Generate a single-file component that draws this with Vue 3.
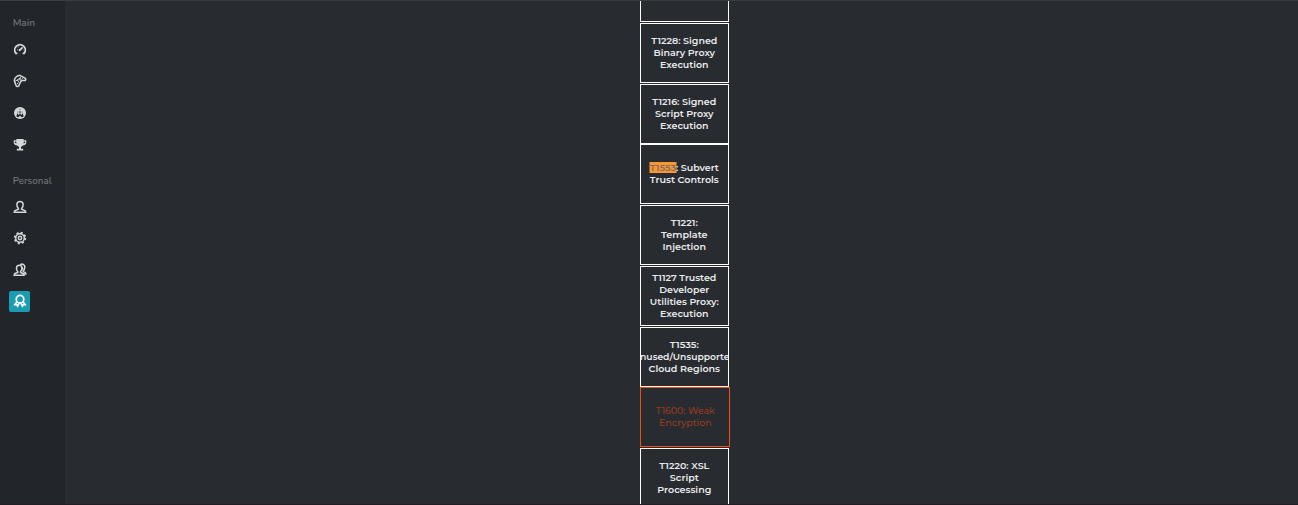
<script setup>
// Each line is [text, drawn width in px]
const cells = [
  { kind: 'first', lines: [] },
  { kind: 'gap1', lines: [['T1228: Signed', 66], ['Binary Proxy', 61.5], ['Execution', 48.5]] },
  { kind: 'gap1', lines: [['T1216: Signed', 64], ['Script Proxy', 58.5], ['Execution', 48.5]] },
  { kind: 'flush', mark: true, lines: [['T1553: Subvert', 69], ['Trust Controls', 69]] },
  { kind: 'gap1', lines: [['T1221:', 27], ['Template', 46.5], ['Injection', 43.5]] },
  { kind: 'gap1', lines: [['T1127 Trusted', 64], ['Developer', 50], ['Utilities Proxy:', 69], ['Execution', 48.5]] },
  { kind: 'gap1', lines: [['T1535:', 29], ['Unused/Unsupported', 103], ['Cloud Regions', 71.5]] },
  { kind: 'weak', lines: [['T1600: Weak', 59], ['Encryption', 52.5]] },
  { kind: 'gap1', lines: [['T1220: XSL', 50], ['Script', 29], ['Processing', 54]] },
]
</script>

<template>
  <div class="page">
    <aside class="sidebar">
      <svg class="heading" width="50" height="16"><text x="0.7" y="12" textLength="22.3" lengthAdjust="spacingAndGlyphs">Main</text></svg>
      <nav class="main-nav">
        <a class="item"><svg viewBox="0 0 14 14"><path d="M4.4 11.3H2.8A5.3 5.3 0 1 1 11.2 11.3H9.6" class="thick"/><path d="M6.7 8.2 9.6 5.3" class="thick"/><path d="M4 7.7h.5M5.2 4.8l.3.3M10 8h.3"/><circle cx="6.7" cy="8.1" r="1.1" class="fill"/></svg></a>
        <a class="item"><svg viewBox="0 0 14 14"><path d="M1.3 6.2C2 3 4.8 1.1 7.4 1.6L12.4 4.3C13.2 5.3 12.6 6.7 11.2 6.6L8.5 6.6 7.1 8.8 5.8 11.8C4.9 12.9 3.3 12.6 3 11.3L1.9 8.6Z"/><path class="thin" d="M2.2 7.4 8 3.4M4.4 5.8l1.4 2.4M9 4.4h.8M4 9.8l1.4-.9"/><circle class="thin" cx="7.2" cy="5.4" r=".8"/></svg></a>
        <a class="item"><svg viewBox="0 0 14 14"><circle cx="7" cy="7" r="6" class="fill"/><g class="cut"><path d="M3.3 10.5 4.3 7.3 5.8 9 7 7.4 8.2 9 9.7 7.3 10.7 10.5 8.8 11.2 7 9.8 5.2 11.2Z"/><circle cx="7" cy="3.3" r=".5"/><circle cx="4.9" cy="6" r=".5"/><circle cx="9.1" cy="6" r=".5"/><rect x="6.5" y="4.9" width="1" height="2.6"/></g></svg></a>
        <a class="item"><svg viewBox="0 0 14 14"><path class="fill" d="M3.4 1h7.2v1.2h2.7v2.2C13.3 6.3 11.5 7.4 9.8 7.5L8 8.9v1.8h2.2v1.7H3.8v-1.7H6V8.9L4.2 7.5C2.5 7.4.7 6.3.7 4.4V2.2h2.7Z"/><path class="cut" d="M1.9 3.5h1.3c0 .9.1 1.3.3 1.9C2.6 5.2 1.9 4.9 1.9 4.3ZM12.1 3.5h-1.3c0 .9-.1 1.3-.3 1.9 .9-.2 1.6-.5 1.6-1.1Z"/></svg></a>
      </nav>
      <svg class="heading second" width="50" height="16"><text x="0.7" y="12" textLength="39" lengthAdjust="spacingAndGlyphs">Personal</text></svg>
      <nav class="personal-nav">
        <a class="item"><svg viewBox="0 0 14 14"><path d="M5.4 8.5C4 7.2 3.8 5.6 3.9 4.3 4 2.4 5.2 1.4 7 1.4S10 2.4 10.1 4.3C10.2 5.6 10 7.2 8.6 8.5V9.3L12 10.6C12.6 10.9 12.7 11.4 12.7 12.2H1.3C1.3 11.4 1.4 10.9 2 10.6L5.4 9.3Z"/></svg></a>
        <a class="item"><svg viewBox="0 0 14 14"><circle cx="7" cy="7" r="4.3"/><circle cx="7" cy="7" r="1.65"/><circle cx="7" cy="7" r="5.35" class="teeth"/></svg></a>
        <a class="item"><svg viewBox="0 0 14 14"><path d="M4.8 8.7C3.4 7.4 3.3 5.7 3.5 4.6 3.8 3 4.7 2.2 6.2 2.2 7.9 2.2 8.9 3.3 8.9 5.1 8.9 6.7 8.4 7.8 7.5 8.7V9.4L10.2 10.5C10.8 10.8 11 11.4 11 12.2H1.2C1.2 11.3 1.4 10.8 2 10.5L4.8 9.4Z"/><path d="M7.3 1.6C9.8.3 12 2 11.8 4.5 11.7 6 11 7.2 10.2 7.8V8.5L12.1 9.4C12.7 9.8 12.8 10.2 12.8 11H11M9 4.2 9.9 6.4"/></svg></a>
        <a class="item active"><svg viewBox="0 0 14 14"><circle cx="7" cy="5.2" r="3.8" class="thick"/><path class="thick" d="M3.8 8 1.9 10.6 3.7 10.8 4.6 12.1 6 9.3M10.2 8 12.1 10.6 10.3 10.8 9.4 12.1 8 9.3"/></svg></a>
      </nav>
    </aside>
    <main class="content">
      <div class="column">
        <div v-for="(cell, i) in cells" :key="i" class="cell" :class="cell.kind">
          <svg v-for="line in cell.lines" :key="line[0]" class="line" width="110" height="12">
            <rect v-if="cell.mark && line[0].startsWith('T1553')" class="mark" x="19.5" y="0" width="27" height="11" />
            <text x="54.3" y="9" text-anchor="middle" :textLength="line[1]" lengthAdjust="spacingAndGlyphs"><template v-if="cell.mark && line[0].startsWith('T1553')"><tspan class="marked">T1553</tspan>: Subvert</template><template v-else>{{ line[0] }}</template></text>
          </svg>
        </div>
      </div>
    </main>
  </div>
</template>

<style scoped>
.page {
  box-sizing: border-box;
  display: flex;
  width: 100%;
  height: 505px;
  overflow: hidden;
  background: #282c31;
  border-top: 1px solid #3a3e42;
  border-bottom: 1px solid #211f25;
  font-family: Montserrat, Inter, "Open Sans", sans-serif;
}
.sidebar {
  box-sizing: border-box;
  width: 65px;
  flex: none;
  padding-top: 13px;
  background: #22262b;
}
.heading { display: block; margin-left: 12px; }
.heading text { font: 600 9.8px Nunito, Inter, sans-serif; fill: #6f7377; }
.second { margin-top: 17px; }
.main-nav, .personal-nav {
  display: grid;
  grid-auto-rows: 21px;
  row-gap: 11px;
  margin: 8px 0 0 9px;
}
.personal-nav { margin-top: 8px; row-gap: 10.55px; }
.item {
  display: flex;
  align-items: center;
  justify-content: center;
  width: 21px;
  height: 21px;
  border-radius: 2px;
}
.item svg {
  width: 14px;
  height: 14px;
  fill: none;
  stroke: #d5d8db;
  stroke-width: 1.5;
}
.item .thick { stroke-width: 1.8; }
.item .thin { stroke-width: 1; }
.item .teeth { stroke-width: 1.7; stroke-dasharray: 2.1 2.1; }
.item .fill { fill: #d5d8db; stroke: none; }
.item .cut { fill: #22262b; stroke: none; }
.active { background: #1a9db2; }
.item.active svg { stroke: #f4f7f8; }
.content { flex: 1; overflow: hidden; }
.column {
  display: flex;
  flex-direction: column;
  width: 90px;
  margin-left: 575px;
}
.cell {
  box-sizing: border-box;
  display: flex;
  flex: none;
  flex-direction: column;
  align-items: center;
  justify-content: center;
  width: 89px;
  height: 60px;
  margin-top: 1px;
  overflow: hidden;
  border: 1px solid #fff;
}
.first { height: 22px; margin-top: -1px; border-top: 0; }
.flush { margin-top: 0; }
.weak { width: 90px; margin-top: 0; padding-left: 1px; border-color: #f84b0c; }
.line { display: block; flex: none; }
.line text { font-size: 9.6px; font-weight: 600; fill: #e8e9ea; }
.weak .line text { font-weight: 500; fill: #993a1c; }
.line .mark { fill: #ff9632; }
.line text .marked { fill: #75706c; }
</style>

<style>
body { margin: 0; background: #282c31; }
</style>
